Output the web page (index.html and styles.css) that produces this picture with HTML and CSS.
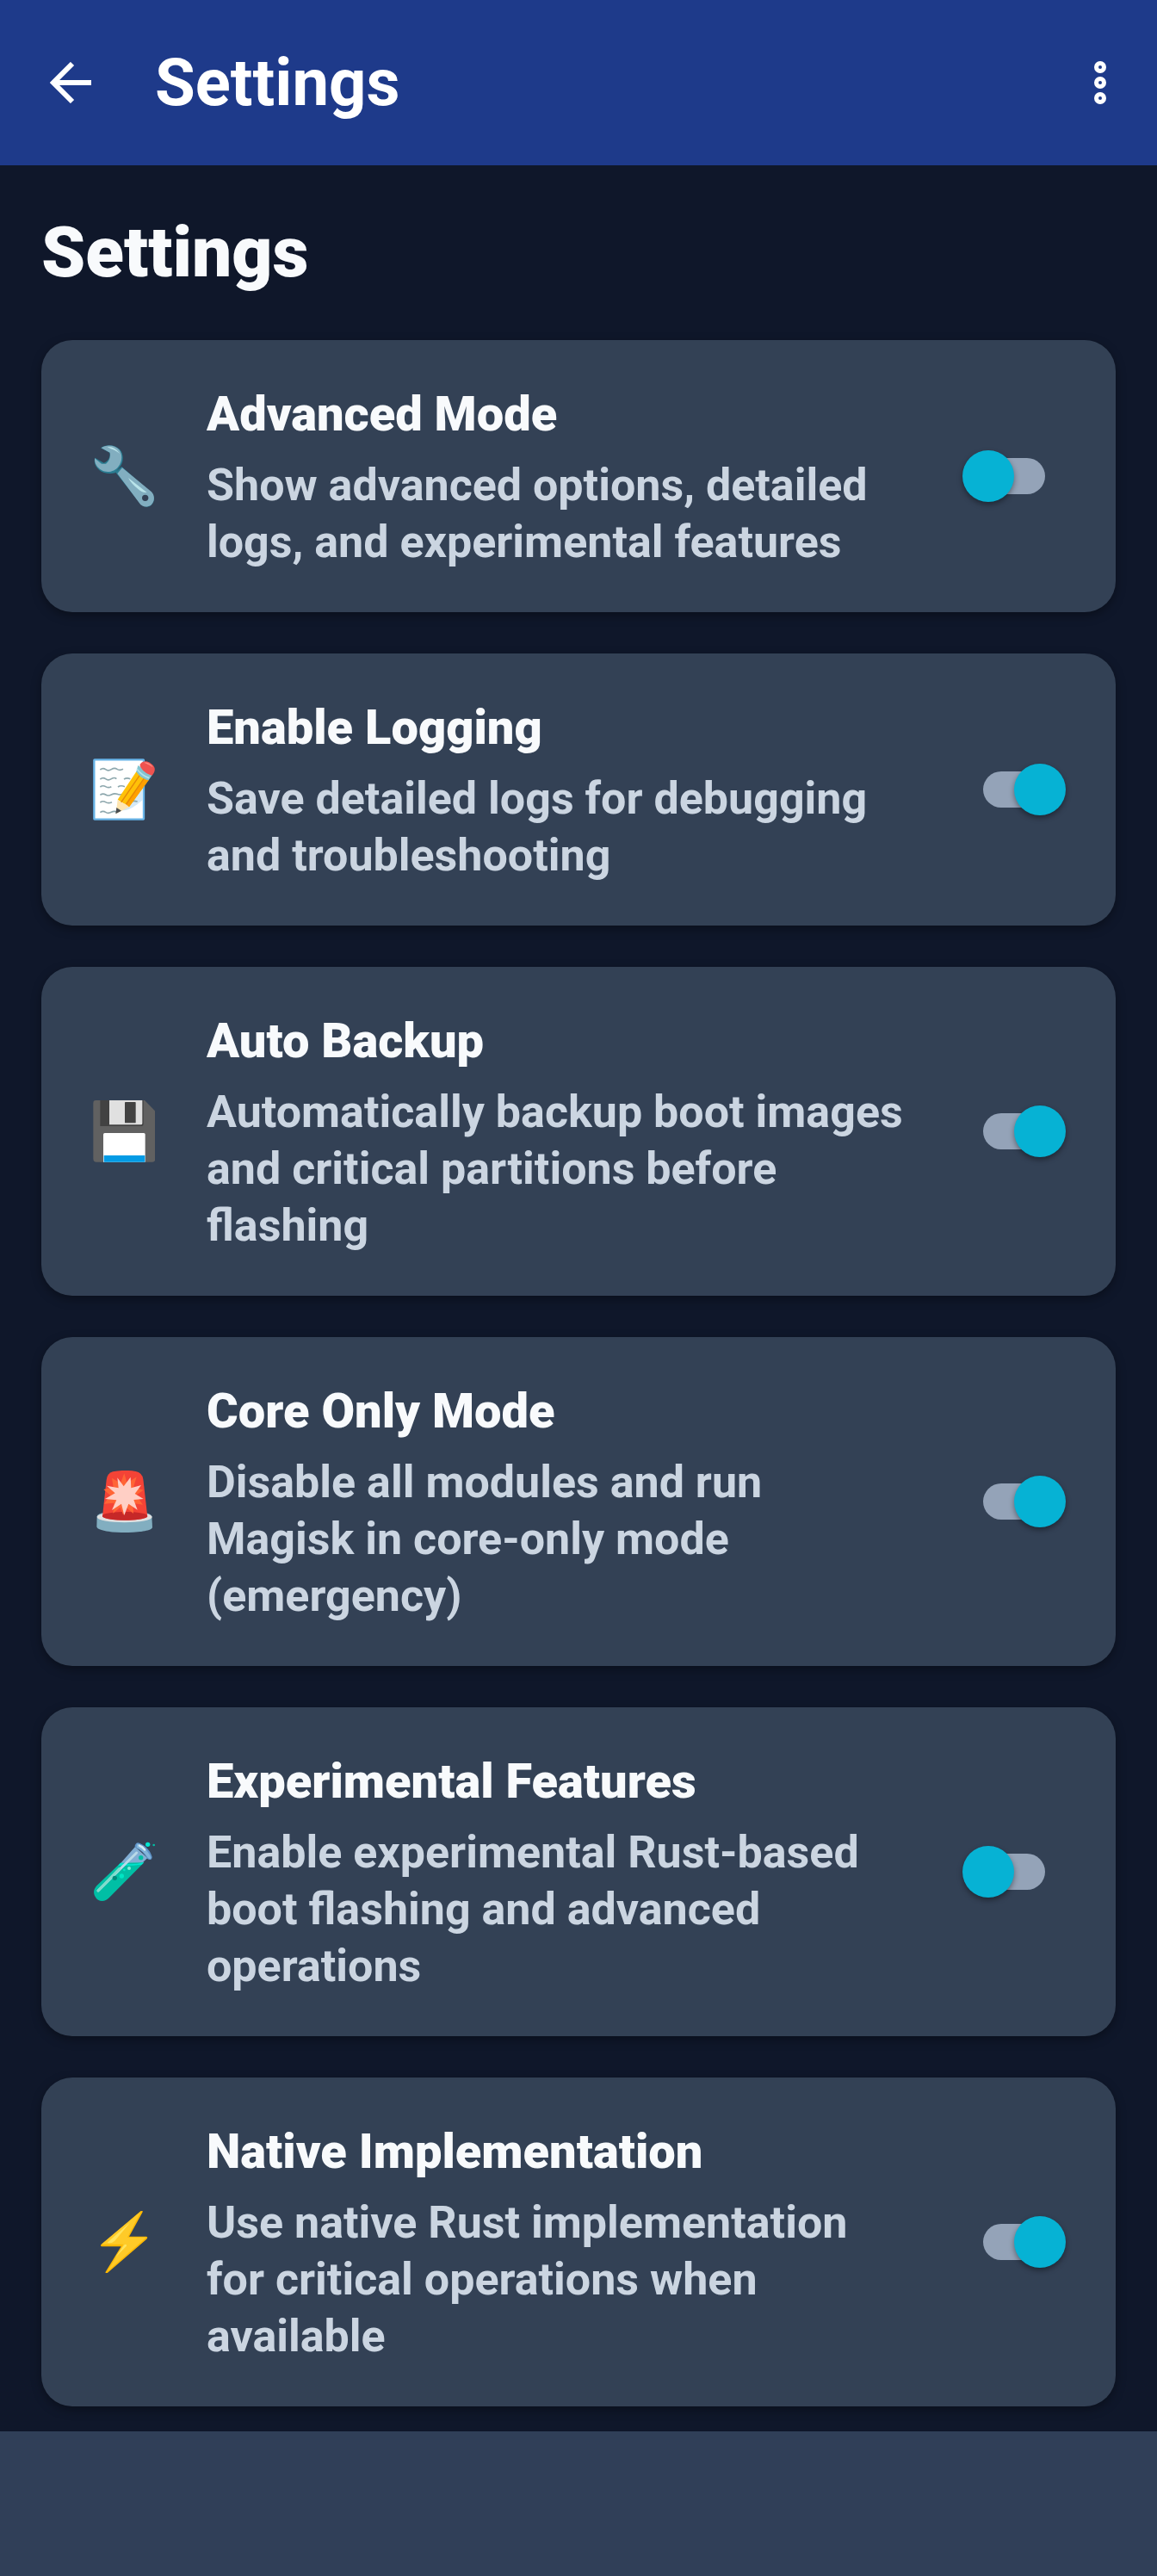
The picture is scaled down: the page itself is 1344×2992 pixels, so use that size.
FILE: index.html
```html
<!DOCTYPE html>
<html lang="en">
<head>
    <meta charset="UTF-8">
    <meta name="viewport" content="width=device-width, initial-scale=1.0">
    <title>Settings</title>
    <link rel="stylesheet" href="styles.css">
</head>
<body>
    <header class="topbar">
        <button class="icon-btn" aria-label="Back">
            <svg class="back-icon" viewBox="0 0 48 48"><path d="M26 2 4 24l22 22M4 24h44" fill="none" stroke="#fff" stroke-width="6"/></svg>
        </button>
        <p class="topbar-title">Settings</p>
        <button class="icon-btn" aria-label="More options">
            <svg class="more-icon" viewBox="0 0 14 50" fill="none" stroke="#fff" stroke-width="5">
                <circle cx="7" cy="7" r="4.5"/><circle cx="7" cy="25" r="4.5"/><circle cx="7" cy="43" r="4.5"/>
            </svg>
        </button>
    </header>

    <main class="content">
        <h1>Settings</h1>

        <div class="settings">
            <div class="card">
                <svg class="card-icon" viewBox="54 51 216 216">
                    <path d="M81 61C98 47 132 48 148 67c13 15 14 43 0 60l-17 21c-18 5-42 2-55-10-14-12-20-28-15-43l31 18c16-7 23-21 20-36z" fill="#2a7d92"/>
                    <path d="M83 61c17-13 48-11 62 6 13 16 11 43-2 58-13 18-39 25-59 13-16-9-25-24-24-41l24 19h15c13-10 17-26 14-39z" fill="#82aec0"/>
                    <path d="m132 145 22-19 108 95c9 16 4 35-10 43-16 6-29-1-37-14z" fill="#2a7d92"/>
                    <path d="m139 150 17-20 102 84c13 14 11 35-2 46-14 9-32 7-41-8z" fill="#82aec0"/>
                    <path d="M104 57c19-1 34 9 43 24-10-11-26-14-43-24zM177 165l65 51c-14 1-21-3-30-11-16-14-28-26-35-40z" fill="#b9e4ea"/>
                    <circle cx="236" cy="235" r="11" fill="#334155"/>
                </svg>
                <div class="card-text">
                    <label for="advanced">Advanced Mode</label>
                    <p id="advanced-desc">Show advanced options, detailed logs, and experimental features</p>
                </div>
                <input class="switch" type="checkbox" id="advanced" aria-describedby="advanced-desc">
            </div>

            <div class="card">
                <svg class="card-icon" viewBox="54 62 216 216">
                    <rect x="58" y="66" width="173" height="208" rx="2" fill="#fff" stroke="#68b4e8" stroke-width="7"/>
                    <path d="m146 244 82-92v54c-18 14-36 31-60 36z" fill="#d4e9f7"/>
                    <path d="M79 101q10-8 19-1t20 0 20-1 21 0M79 134q10-8 19-1t20 0 18 0M162 134q10-6 22-1M79 161q10-7 19-1t20 0M141 161q10-7 24-1M79 189q10-7 19-1t20 0 20-2 20 0M79 215q10-7 19-1t22 0M187 213q8-5 22-1M79 250q10-7 19-1t20 0 20 0" fill="none" stroke="#8da7ad" stroke-width="5"/>
                    <path d="m140 205 66-99 42 31-68 94z" fill="#ffc107"/>
                    <path d="m180 231 68-94-14-11-70 99z" fill="#ffa000"/>
                    <path d="m152 215 67-98M168 224l67-97" stroke="#e58a08" stroke-width="4"/>
                    <path d="m140 205 12 10 16 6 12 10-46 24z" fill="#ffe5b0"/>
                    <path d="m136 233 17 11-20 11z" fill="#494d50"/>
                    <path d="m211 86 49 34-12 18c-20-4-34-15-43-30z" fill="#82c4d0"/>
                    <path d="M218 82c14-18 31-9 45 3 9 10 9 22-3 36-20-5-34-17-42-32z" fill="#ef5350"/>
                    <path d="M207 99c12 15 25 26 43 31" fill="none" stroke="#b2e2e9" stroke-width="5"/>
                    <path d="M232 76c11-3 26 6 31 17-12-9-18-11-31-17z" fill="#ff8a80"/>
                </svg>
                <div class="card-text">
                    <label for="logging">Enable Logging</label>
                    <p id="logging-desc">Save detailed logs for debugging and troubleshooting</p>
                </div>
                <input class="switch" type="checkbox" id="logging" aria-describedby="logging-desc" checked>
            </div>

            <div class="card">
                <svg class="card-icon" viewBox="54 54 216 216">
                    <path d="M64 54h170l37 38v167q0 10-10 10H66q-11 0-11-12V64q0-10 9-10z" fill="#616161"/>
                    <path d="M79 54h151v83q0 7-7 7H79z" fill="#424242"/>
                    <path d="M111 54h115v80q0 5-5 5H111z" fill="#e0e0e0"/>
                    <rect x="165" y="60" width="38" height="73" rx="2" fill="#424242"/>
                    <path d="M95 168h136q5 0 5 5v96H90v-96q0-5 5-5z" fill="#fff"/>
                    <path d="M92 246h143v23H92z" fill="#039be5"/>
                </svg>
                <div class="card-text">
                    <label for="backup">Auto Backup</label>
                    <p id="backup-desc">Automatically backup boot images and critical partitions before flashing</p>
                </div>
                <input class="switch" type="checkbox" id="backup" aria-describedby="backup-desc" checked>
            </div>

            <div class="card">
                <svg class="card-icon" viewBox="54 54 216 216">
                    <path d="M68 214q2-11 27-13l132-1q29 2 32 14l2 38c-4 24-190 25-194-2z" fill="#82aec0"/>
                    <ellipse cx="164" cy="216" rx="96" ry="19" fill="#e0e0e0"/>
                    <path d="M87 214 101 86q3-23 22-28 41-8 80-1 22 4 26 27l15 131c-17 16-141 17-157-1z" fill="#f44336"/>
                    <path d="M87 209c21-14 135-15 156 0v6c-22 16-135 16-156 0z" fill="#c62828"/>
                    <path d="m163 64 10 34 33-22-11 37 35 9-26 18 24 33-35-5 2 36-24-20-11 25-11-27-25 21 3-36-35 3 23-29-24-21 34-8-5-32 30 18z" fill="#ff6536"/>
                    <path d="m139 79 22 30 24-32 2 38 35-10-22 30 30 18-34 3 13 35-31-21-15 40-10-40-33 22 16-35-40-4 35-20-29-26 41 8z" fill="#ffcfc5"/>
                </svg>
                <div class="card-text">
                    <label for="core">Core Only Mode</label>
                    <p id="core-desc">Disable all modules and run Magisk in core-only mode (emergency)</p>
                </div>
                <input class="switch" type="checkbox" id="core" aria-describedby="core-desc" checked>
            </div>

            <div class="card">
                <svg class="card-icon" viewBox="54 54 216 216">
                    <path d="m201 75 43 39-41 40-53-21z" fill="#82aed4"/>
                    <path d="m150 131 82-1L113 250c-16 20-42 18-51-1-9-15-4-28 5-38z" fill="#00bfa5"/>
                    <path d="M150 131q40 10 82-2l-8 8q-43 5-82 3z" fill="#00e5cf"/>
                    <path d="M202 67q4-9 14-5c24 10 39 29 44 48 0 11-9 13-16 7-11-18-23-30-40-38-5-3-5-7-2-12z" fill="#5e92c8"/>
                    <path d="M207 64c18 5 39 25 50 49-4 7-11 3-13-1-9-15-22-27-38-34z" fill="#82b5da"/>
                    <path d="M216 71q10 3 18 14" stroke="#d5eaf5" stroke-width="8" stroke-linecap="round"/>
                    <path d="m72 228 134-132" stroke="#b8d9e8" stroke-width="9" stroke-linecap="round"/>
                    <path d="m72 228 73-76" stroke="#80dccc" stroke-width="9" stroke-linecap="round"/>
                    <circle cx="221" cy="113" r="8" fill="#00bfa5"/><circle cx="130" cy="184" r="8" fill="#00897b"/>
                    <circle cx="154" cy="177" r="8" fill="#00e5c3"/><circle cx="180" cy="150" r="6" fill="#82ead9"/>
                    <circle cx="163" cy="156" r="4" fill="#00e5c3"/><circle cx="245" cy="67" r="8" fill="#00e5cf"/><circle cx="266" cy="69" r="4" fill="#00bfa5"/>
                </svg>
                <div class="card-text">
                    <label for="experimental">Experimental Features</label>
                    <p id="experimental-desc">Enable experimental Rust-based boot flashing and advanced operations</p>
                </div>
                <input class="switch" type="checkbox" id="experimental" aria-describedby="experimental-desc">
            </div>

            <div class="card">
                <svg class="card-icon" viewBox="54 56 216 216">
                    <path d="M222 55q6-2 5 5l-47 85h60q7 2 1 9L102 274q-6 0-4-6l54-88H84q-6-3-1-8z" fill="#feb804"/>
                    <path d="M222 57 174 148h66L105 266l55-94H84z" fill="#ffca28"/>
                    <path d="m104 166 81-72-55 66q-14 12-26 6zM131 219l31-44q10-6 9 3z" fill="#ffe45e"/>
                </svg>
                <div class="card-text">
                    <label for="native">Native Implementation</label>
                    <p id="native-desc">Use native Rust implementation for critical operations when available</p>
                </div>
                <input class="switch" type="checkbox" id="native" aria-describedby="native-desc" checked>
            </div>
        </div>
    </main>

    <footer class="bottom-bar"></footer>
</body>
</html>
```
FILE: styles.css
```css
* {
    box-sizing: border-box;
}

body {
    margin: 0;
    min-height: 100vh;
    display: flex;
    flex-direction: column;
    background-color: #0f172a;
    color: #f8fafc;
    font-family: Roboto, "Liberation Sans", sans-serif;
    font-weight: 700;
}

h1,
p {
    margin: 0;
}

.topbar {
    display: flex;
    align-items: center;
    min-height: 192px;
    padding: 0 48px;
    background-color: #1e3a8a;
    color: #ffffff;
}

.topbar-title {
    flex: 1;
    font-size: 76px;
    line-height: 96px;
    padding-left: 64px;
}

.icon-btn {
    display: flex;
    padding: 10px;
    border: 0;
    background: none;
    cursor: pointer;
}

.back-icon {
    width: 48px;
    height: 48px;
}

.more-icon {
    width: 16px;
    height: 50px;
}

.content {
    flex: 1;
    padding: 48px 48px 29px;
}

h1 {
    font-size: 82px;
    font-weight: 900;
    line-height: 107px;
    margin-bottom: 48px;
}

.settings {
    display: flex;
    flex-direction: column;
    gap: 48px;
}

.card {
    display: flex;
    align-items: center;
    padding: 48px;
    border-radius: 36px;
    background-color: #334155;
    box-shadow: 0 4px 12px rgba(0, 0, 0, 0.35);
}

.card-icon {
    flex: none;
    width: 72px;
    height: 72px;
    margin: 0 60px 0 12px;
}

.card-text {
    flex: 1;
}

.card-text label {
    display: block;
    margin-bottom: 12px;
    font-size: 56px;
    font-weight: 900;
    line-height: 76px;
}

.card-text p {
    color: #cbd5e1;
    font-size: 52px;
    line-height: 66px;
}

/* the thumb hangs over the ends of the track */
.switch {
    appearance: none;
    flex: none;
    width: 84px;
    height: 42px;
    margin: 0 34px 0 80px;
    border-radius: 21px;
    background-color: #94a3b8;
    cursor: pointer;
}

.switch::before {
    content: "";
    display: block;
    width: 60px;
    height: 60px;
    margin: -9px 0 0 -12px;
    border-radius: 50%;
    background-color: #06b2d4;
    box-shadow: 0 3px 6px rgba(0, 0, 0, 0.4);
}

.switch:checked {
    margin: 0 22px 0 92px;
}

.switch:checked::before {
    margin-left: 36px;
}

.bottom-bar {
    height: 168px;
    background-color: #303f58;
}
```
